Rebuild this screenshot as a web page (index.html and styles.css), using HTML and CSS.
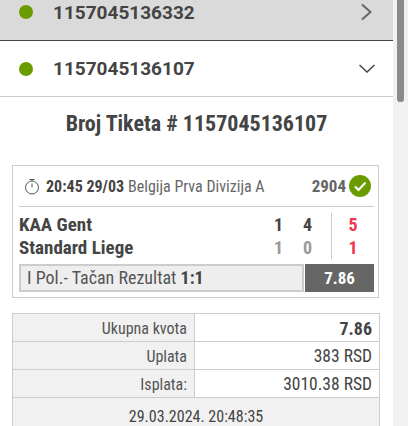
FILE: index.html
```html
<!DOCTYPE html>
<html>
<head>
  <meta charset="utf-8">
  <link rel="stylesheet" href="styles.css">
</head>
<body>
<div class="page">
  <div class="content">
    <div class="ticketRow rowClosed">
      <span class="dot"></span>
      <span class="ticketNo">1157045136332</span>
      <svg class="arrow" width="16" height="18" viewBox="0 0 16 18"><path d="M3 1.5 L11.5 9 L3 16.5" /></svg>
    </div>
    <div class="ticketRow rowOpen">
      <span class="dot"></span>
      <span class="ticketNo">1157045136107</span>
      <svg class="arrow" width="16" height="16" viewBox="0 0 16 16"><path d="M0.5 4 L8 11 L15.5 4" /></svg>
    </div>
    <h1 class="title">Broj Tiketa # 1157045136107</h1>

    <div class="card">
      <div class="cardHead">
        <svg class="clock" width="16" height="18" viewBox="0 0 16 18">
          <circle cx="8" cy="10.5" r="6.5" />
          <path d="M5.5 2.5 H10.5 M8 2.5 V4 M8 10.5 V6.5" />
        </svg>
        <span class="time">20:45 29/03</span>
        <span class="league">Belgija Prva Divizija A</span>
        <span class="code">2904</span>
        <svg class="check" width="22" height="22" viewBox="0 0 22 22">
          <circle cx="11" cy="11" r="11" />
          <path d="M6 11.5 L9.5 15 L16.5 7.5" />
        </svg>
      </div>
      <div class="match">
        <div class="teams">
          <div>KAA Gent</div>
          <div>Standard Liege</div>
        </div>
        <div class="scores">
          <span>1</span><span>4</span>
          <span class="away">1</span><span class="away">0</span>
        </div>
        <div class="totals">
          <div>5</div>
          <div>1</div>
        </div>
      </div>
      <div class="betRow">
        <div class="betName">I Pol.- Tačan Rezultat <b>1:1</b></div>
        <div class="betOdd">7.86</div>
      </div>
    </div>

    <div class="summary">
      <div class="sumLabel">Ukupna kvota</div><div class="sumValue strong">7.86</div>
      <div class="sumLabel">Uplata</div><div class="sumValue">383 RSD</div>
      <div class="sumLabel">Isplata:</div><div class="sumValue">3010.38 RSD</div>
      <div class="sumDate">29.03.2024. 20:48:35</div>
    </div>
  </div>
  <div class="scrollbar"><div class="thumb"></div></div>
</div>
</body>
</html>
```
FILE: styles.css
```css
html, body { margin: 0; padding: 0; height: 100%; overflow: hidden; }
body {
  background: #fff;
  color: #444;
  font-family: Roboto, "Liberation Sans", sans-serif;
}
.page { display: flex; height: 426px; overflow: hidden; }
.content { width: 393px; flex: none; }

.scrollbar { width: 15px; background: #f1f1f1; }
.thumb { width: 7px; height: 102px; margin-left: 4px; background: #8a8a8a; border-radius: 0 0 3px 3px; }

.ticketRow { display: flex; align-items: center; box-sizing: border-box; padding: 0 18px 0 19px; }
.rowClosed { height: 41px; padding-bottom: 16px; background: #dadada; border-bottom: 1px solid #444; }
.rowOpen { height: 56px; background: #fff; border-bottom: 1px solid #ccc; }
.dot { width: 14px; height: 14px; border-radius: 50%; background: #6a9c00; flex: none; }
.ticketNo { margin-left: 20px; font-size: 19px; font-weight: 700; flex: 1; }
.arrow { fill: none; stroke: #444; stroke-width: 1.5; }
.rowClosed .arrow { stroke: #666; stroke-width: 2; }

.title {
  margin: 0;
  padding: 15px 0 15px;
  text-align: center;
  font-size: 22px;
  line-height: 24px;
  font-weight: 700;
  font-stretch: 75%;
}

.card {
  margin: 14px 14px 0 12px;
  border: 1px solid #ccc;
  padding: 0 4px 5px 6px;
  font-stretch: 75%;
}
.cardHead {
  display: flex;
  align-items: center;
  height: 40px;
  border-bottom: 1px solid #ccc;
  font-size: 16px;
}
.clock { fill: none; stroke: #555; stroke-width: 1; margin: 0 6px 0 5px; }
.time { font-weight: 700; margin-right: 4px; }
.league { flex: 1; color: #666; }
.code { font-weight: 700; color: #666; margin-right: 3px; font-size: 17px; }
.check { flex: none; margin-right: 3px; }
.check circle { fill: #6a9c00; }
.check path { fill: none; stroke: #fff; stroke-width: 2; }

.match { display: flex; align-items: center; padding-top: 6px; font-size: 19px; font-weight: 700; line-height: 23px; }
.teams { flex: 1; }
.scores { display: grid; grid-template-columns: 29px 29px; padding-right: 9px; font-size: 18px; text-align: center; }
.away { color: #999; }
.totals { width: 42px; border-left: 1px solid #ccc; text-align: center; color: #f0364a; font-size: 18px; }

.betRow { display: flex; height: 28px; margin-top: 5px; }
.betName {
  flex: 1;
  box-sizing: border-box;
  border: 2px solid #ccc;
  background: #eee;
  padding-left: 6px;
  font-size: 18px;
  line-height: 24px;
  color: #555;
}
.betName b { color: #444; }
.betOdd { width: 69px; margin-left: 1px; background: #666; color: #fff; text-align: center; font-weight: 700; font-size: 17px; line-height: 28px; }

.summary {
  display: grid;
  grid-template-columns: 182px 1fr;
  margin: 15px 13px 0 12px;
  border: 1px solid #ccc;
  border-bottom: 0;
  font-size: 16px;
  font-stretch: 75%;
}
.sumLabel, .sumValue { height: 27px; line-height: 29px; text-align: right; border-bottom: 1px solid #ccc; padding-right: 7px; }
.sumLabel { background: #f1f1f1; border-right: 1px solid #ccc; color: #555; }
.sumValue { font-size: 17.5px; }
.sumValue.strong { font-weight: 700; font-size: 18px; }
.sumDate { grid-column: 1 / 3; background: #f1f1f1; text-align: center; height: 40px; line-height: 38px; }
```
